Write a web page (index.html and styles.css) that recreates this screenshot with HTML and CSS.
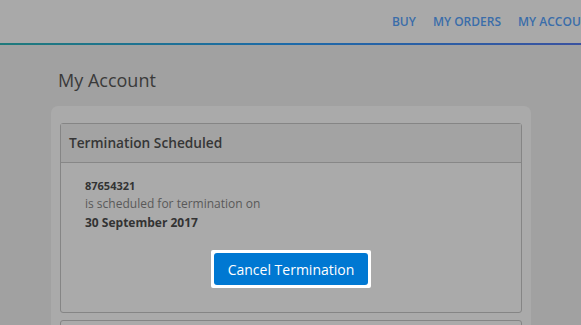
FILE: index.html
```html
<!DOCTYPE html>
<html lang="en">
<head>
    <meta charset="UTF-8">
    <meta name="viewport" content="width=device-width, initial-scale=1.0">
    <title>My Account</title>
    <link rel="stylesheet" href="styles.css">
</head>
<body>
    <header class="topbar">
        <div class="topbar-inner">
            <nav class="nav">
                <a href="#">Buy</a>
                <a href="#">My Orders</a>
                <a href="#">My Account</a>
            </nav>
        </div>
    </header>

    <main class="page">
        <h1>My Account</h1>

        <div class="card">
            <div class="panel">
                <div class="panel-heading">Termination Scheduled</div>
                <div class="panel-body">
                    <div class="number">87654321</div>
                    <div class="note">is scheduled for termination on</div>
                    <div class="date">30 September 2017</div>
                    <div class="actions">
                        <span class="spotlight"><button id="cancelButton">Cancel Termination</button></span>
                    </div>
                </div>
            </div>
            <div class="panel panel-next"></div>
        </div>
    </main>
</body>
</html>
```

FILE: styles.css
```css
html, body { margin: 0; overflow: hidden; }
body { font-family: "Open Sans", "Liberation Sans", sans-serif; background-color: #a1a1a1; color: #333; width: 581px; height: 325px; }

.topbar { background-color: #a9a9a9; height: 43px; border-bottom: 2px solid transparent; border-image: linear-gradient(90deg, #1f7a7b, #1d6aa9 50%, #3a52a0) 1; overflow: hidden; }
.topbar-inner { width: 640px; height: 43px; display: flex; align-items: center; }
.nav { margin-left: auto; display: flex; gap: 17px; padding-right: 43px; }
.nav a { color: #3a6daa; text-decoration: none; text-transform: uppercase; font-weight: 600; font-size: 12px; white-space: nowrap; }

.page { padding: 0 50px 0 51px; }
h1 { font-size: 18px; font-weight: 400; color: #3a3a3a; margin: 23px 0 0 7px; line-height: 24px; }

.card { background-color: #aaaaaa; border-radius: 7px; margin-top: 14px; padding: 17px 9px 0; width: 462px; }
.panel { border: 1px solid #858585; border-radius: 3px; background-color: #aaaaaa; }
.panel-heading { background-color: #a3a3a3; border-bottom: 1px solid #878787; font-size: 13.7px; font-weight: 600; color: #363636; padding: 0 8px; height: 38px; line-height: 38px; }
.panel-body { padding: 14px 24px 24px; }
.number { font-size: 11px; font-weight: 700; line-height: 18px; color: #333; }
.note { font-size: 12px; color: #595959; line-height: 18px; }
.date { font-size: 12px; font-weight: 700; line-height: 19px; color: #333; }
.actions { display: flex; justify-content: center; margin-top: 18px; }
.spotlight { display: block; background-color: #fff; padding: 3px; border-radius: 2px; }
button { display: block; background-color: #0078d2; color: #fff; border: none; border-radius: 3px; font-family: inherit; font-size: 14px; padding: 0 14px; height: 32px; white-space: nowrap; cursor: pointer; }
.panel-next { margin-top: 7px; height: 20px; }
```
